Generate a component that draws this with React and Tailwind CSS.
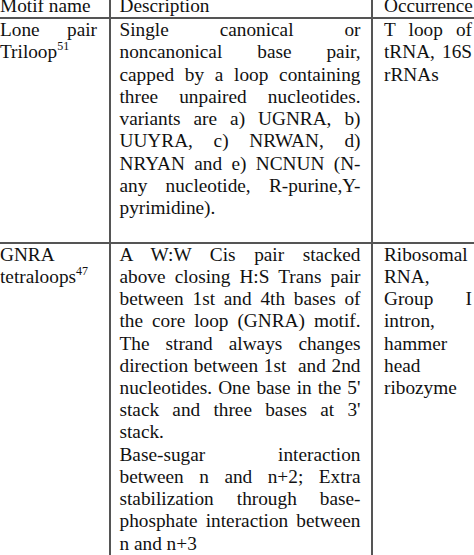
import * as React from "react";

// one rendered line of a cell; justified lines spread to the full cell width
const Line = ({ j, children }) => (
  <div className={j ? "text-justify [text-align-last:justify]" : "text-left"}>
    {children}
  </div>
);

const Sup = ({ children }) => (
  <span className="text-[12px] leading-[0] align-[8.5px]">{children}</span>
);

const rows = [
  {
    motif: [
      { j: true, t: "Lone pair" },
      { t: ["Triloop", <Sup key="s">51</Sup>] },
    ],
    desc: [
      { j: true, t: "Single canonical or" },
      { j: true, t: "noncanonical base pair," },
      { j: true, t: "capped by a loop containing" },
      { j: true, t: "three unpaired nucleotides." },
      { j: true, t: "variants are a) UGNRA, b)" },
      { j: true, t: "UUYRA, c) NRWAN, d)" },
      { j: true, t: "NRYAN and e) NCNUN (N-" },
      { j: true, t: "any nucleotide, R-purine,Y-" },
      { t: "pyrimidine)." },
      { t: "\u00a0" },
    ],
    occ: [
      { j: true, t: "T loop of" },
      { j: true, t: "tRNA, 16S" },
      { t: "rRNAs" },
    ],
  },
  {
    motif: [
      { t: "GNRA" },
      { t: ["tetraloops", <Sup key="s">47</Sup>] },
    ],
    desc: [
      { j: true, t: "A W:W Cis pair stacked" },
      { j: true, t: "above closing H:S Trans pair" },
      { j: true, t: "between 1st and 4th bases of" },
      { j: true, t: "the core loop (GNRA) motif." },
      { j: true, t: "The strand always changes" },
      { j: true, t: "direction between 1st\u00a0 and 2nd" },
      { j: true, t: "nucleotides. One base in the 5'" },
      { j: true, t: "stack and three bases at 3'" },
      { t: "stack." },
      { j: true, t: "Base-sugar interaction" },
      { j: true, t: "between n and n+2; Extra" },
      { j: true, t: "stabilization through base-" },
      { j: true, t: "phosphate interaction between" },
      { t: "n and n+3" },
    ],
    occ: [
      { t: "Ribosomal" },
      { t: "RNA," },
      { j: true, t: "Group I" },
      { t: "intron," },
      { t: "hammer" },
      { t: "head" },
      { t: "ribozyme" },
    ],
  },
];

const Cells = ({ items }) =>
  items.map((l, i) => (
    <Line key={i} j={l.j}>
      {l.t}
    </Line>
  ));

const MotifTable = () => {
  return (
    <div className="h-[555px] w-[474px] overflow-hidden bg-white">
      <div className="-mt-[5px] font-['Liberation_Serif',_serif] text-[19.3px] leading-[22.23px] text-[#111]">
        {/* Header */}
        <div className="flex border-b-2 border-[#555]">
          <div className="w-[111px] shrink-0 border-r-2 border-[#555] pr-[12px]">Motif name</div>
          <div className="w-[261.5px] shrink-0 border-r-2 border-[#555] pl-[8.5px] pr-[10px]">Description</div>
          <div className="w-[101.5px] shrink-0 pl-[11.5px] pr-[2px]">Occurrence</div>
        </div>

        {/* Body */}
        {rows.map((r, i) => (
          <div
            key={i}
            className={i < rows.length - 1 ? "flex border-b-2 border-[#555]" : "flex"}
          >
            <div className="w-[111px] shrink-0 border-r-2 border-[#555] pr-[12px]">
              <Cells items={r.motif} />
            </div>
            <div className="w-[261.5px] shrink-0 border-r-2 border-[#555] pl-[8.5px] pr-[10px]">
              <Cells items={r.desc} />
            </div>
            <div className="w-[101.5px] shrink-0 pl-[11.5px] pr-[2px]">
              <Cells items={r.occ} />
            </div>
          </div>
        ))}
      </div>
    </div>
  );
};

export default function App() {
  return <MotifTable />;
}
